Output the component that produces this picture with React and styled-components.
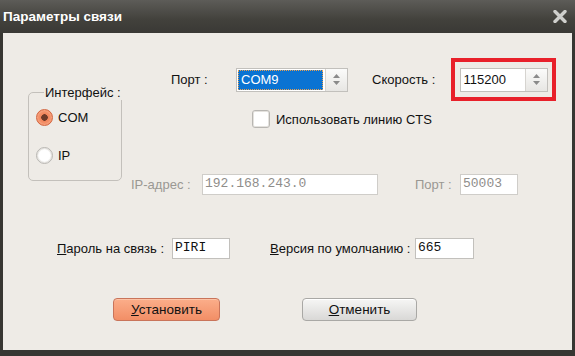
import React, { useState } from "react";
import styled, { createGlobalStyle } from "styled-components";

const Global = createGlobalStyle`
    html, body {
        margin: 0;
        padding: 0;
        background: #373632;
    }
    * { box-sizing: border-box; }
`;

export default function App()
{
    const [iface, setIface] = useState("COM");
    const [cts, setCts] = useState(false);

    return(
        <Window>
            <Global />
            <TitleBar>
                <Title>Параметры связи</Title>
                <Close>
                    <svg width="14" height="13" viewBox="0 0 14 13">
                        <path d="M2 1.5 L12 11.5 M12 1.5 L2 11.5" stroke="#cfcfcc" strokeWidth="3.4" strokeLinecap="round" />
                    </svg>
                </Close>
            </TitleBar>
            <Panel>
                <Top>
                    <GroupCol>
                        <Group>
                            <Legend>Интерфейс :</Legend>
                            <Radio onClick={() => setIface("COM")}>
                                <RadioDot $on={iface === "COM"} />
                                COM
                            </Radio>
                            <Radio onClick={() => setIface("IP")}>
                                <RadioDot $on={iface === "IP"} />
                                IP
                            </Radio>
                        </Group>
                    </GroupCol>
                    <RightCol>
                        <PortRow>
                            <Label $w={65}>Порт :</Label>
                            <Combo>
                                <ComboValue>COM9</ComboValue>
                                <Spin />
                            </Combo>
                            <Label $w={79} $ml={24}>Скорость :</Label>
                            <Highlight>
                                <SpinBox>
                                    <SpinValue>115200</SpinValue>
                                    <Spin />
                                </SpinBox>
                            </Highlight>
                        </PortRow>
                        <CheckRow onClick={() => setCts(!cts)}>
                            <CheckBox>{cts ? "✓" : ""}</CheckBox>
                            Использовать линию CTS
                        </CheckRow>
                        <IpRow>
                            <Label $w={71} $off>IP-адрес :</Label>
                            <Field $w={176} $off>192.168.243.0</Field>
                            <Label $w={45} $ml={37} $off>Порт :</Label>
                            <Field $w={58} $off>50003</Field>
                        </IpRow>
                    </RightCol>
                </Top>
                <PassRow>
                    <Label $w={115}><u>П</u>ароль на связь :</Label>
                    <Field $w={58}>PIRI</Field>
                    <Label $w={145} $ml={40}><u>В</u>ерсия по умолчанию :</Label>
                    <Field $w={59}>665</Field>
                </PassRow>
                <Buttons>
                    <Button $primary $w={107}><u>У</u>становить</Button>
                    <Button $w={115}><u>О</u>тменить</Button>
                </Buttons>
            </Panel>
        </Window>
    )
}

function Spin()
{
    return(
        <Arrows>
            <svg width="9" height="13" viewBox="0 0 9 13">
                <path d="M4.5 1 L8 5 L1 5 Z" fill="#8a8a8a" />
                <path d="M4.5 12 L8 8 L1 8 Z" fill="#8a8a8a" />
            </svg>
        </Arrows>
    )
}

const Window = styled.div`
    width: 575px;
    height: 356px;
    display: flex;
    flex-direction: column;
    background: #373632;
    font-family: "Liberation Sans", Arial, sans-serif;
    font-size: 13px;
    color: #111;
`

const TitleBar = styled.div`
    height: 33px;
    display: flex;
    align-items: center;
    justify-content: space-between;
    padding: 0 8px 0 3px;
    background: linear-gradient(#5d5c58, #42413c 60%, #3a3935);
`

const Title = styled.div`
    color: #fff;
    font-weight: bold;
    font-size: 13.5px;
    padding-bottom: 1px;
`

const Close = styled.div`
    display: flex;
    margin-top: -1px;
`

const Panel = styled.div`
    flex: 1;
    margin: 0 3px 6px 3px;
    background: #eeebe6;
    padding-top: 25px;
    display: flex;
    flex-direction: column;
`

const Top = styled.div`
    display: flex;
`

const GroupCol = styled.div`
    margin-left: 25px;
    width: 94px;
    padding-top: 27px;
`

const Group = styled.fieldset`
    margin: 0;
    padding: 0 0 0 7px;
    height: 96px;
    border: 1px solid #c3c0bb;
    border-radius: 5px;
    display: flex;
    flex-direction: column;
    gap: 21px;
    min-width: 0;
`

const Legend = styled.legend`
    padding: 0 1px;
    margin-left: 8px;
    line-height: 15px;
    margin-bottom: 9px;
    white-space: nowrap;
`

const Radio = styled.label`
    display: flex;
    align-items: center;
    gap: 5px;
    height: 17px;
    cursor: pointer;
`

const RadioDot = styled.span`
    width: 17px;
    height: 17px;
    border-radius: 50%;
    border: 1px solid ${p => p.$on ? "#d2643e" : "#b9b7b3"};
    background: ${p => p.$on
        ? "radial-gradient(circle, #6e3a28 0 3px, #f0845a 3.5px, #f59a74 7px)"
        : "radial-gradient(circle, #ffffff 0 5px, #f2f1ef 8px)"};
    box-shadow: inset 0 0 0 1px ${p => p.$on ? "#f6a07c" : "#e6e4e0"};
`

const RightCol = styled.div`
    margin-left: 9px;
    display: flex;
    flex-direction: column;
`

const PortRow = styled.div`
    display: flex;
    align-items: center;
    padding-left: 40px;
`

const Label = styled.span`
    width: ${p => p.$w}px;
    margin-left: ${p => p.$ml || 0}px;
    color: ${p => p.$off ? "#9a9893" : "#111"};
    white-space: nowrap;
    flex-shrink: 0;
`

const Combo = styled.div`
    width: 112px;
    height: 24px;
    display: flex;
    background: #fff;
    border: 1px solid #c2c0bc;
    padding: 1px;
`

const ComboValue = styled.div`
    flex: 1;
    background: #0a73d2;
    color: #fff;
    border: 1px dotted #e8a050;
    padding-left: 2px;
    line-height: 18px;
`

const Arrows = styled.div`
    width: 22px;
    display: flex;
    align-items: center;
    justify-content: center;
    background: linear-gradient(#fbfbfa, #e7e6e3);
    border-left: 1px solid #d6d4d0;
    margin: -1px -1px -1px 2px;
`

const Highlight = styled.div`
    width: 105px;
    height: 43px;
    border: 4px solid #e8202a;
    display: flex;
    align-items: center;
    justify-content: center;
`

const SpinBox = styled.div`
    width: 88px;
    height: 24px;
    display: flex;
    background: #fff;
    border: 1px solid #c2c0bc;
    padding: 1px;
`

const SpinValue = styled.div`
    flex: 1;
    padding-left: 2px;
    line-height: 20px;
`

const CheckRow = styled.label`
    display: flex;
    align-items: center;
    gap: 6px;
    margin: 9px 0 0 121px;
    height: 18px;
    cursor: pointer;
`

const CheckBox = styled.span`
    width: 18px;
    height: 18px;
    border: 1px solid #b8b6b2;
    border-radius: 3px;
    background: #fff;
    box-shadow: inset 0 0 0 1px #e4e2de;
    font-size: 12px;
    line-height: 16px;
    text-align: center;
`

const IpRow = styled.div`
    display: flex;
    align-items: center;
    margin-top: 46px;
`

const Field = styled.div`
    width: ${p => p.$w}px;
    height: 21px;
    background: #fff;
    border: 1px solid ${p => p.$off ? "#cfcdc9" : "#c2c0bc"};
    color: ${p => p.$off ? "#8f8d8a" : "#111"};
    font-family: "Liberation Mono", "Courier New", monospace;
    font-size: 13px;
    line-height: 17px;
    padding-left: 2px;
    flex-shrink: 0;
`

const PassRow = styled.div`
    display: flex;
    align-items: center;
    margin: 43px 0 0 54px;
`

const Buttons = styled.div`
    display: flex;
    gap: 82px;
    margin: 39px 0 0 110px;
`

const Button = styled.button`
    width: ${p => p.$w}px;
    height: 23px;
    border-radius: 4px;
    font-family: "Liberation Sans", Arial, sans-serif;
    font-size: 13.5px;
    color: #111;
    padding: 0;
    border: 1px solid ${p => p.$primary ? "#c9745a" : "#a9a8a5"};
    background: ${p => p.$primary
        ? "linear-gradient(#fbae8a, #f28e66)"
        : "linear-gradient(#f6f6f5, #d9d8d6)"};
    box-shadow: inset 0 1px 0 ${p => p.$primary ? "#fcc3a6" : "#ffffff"};
`
